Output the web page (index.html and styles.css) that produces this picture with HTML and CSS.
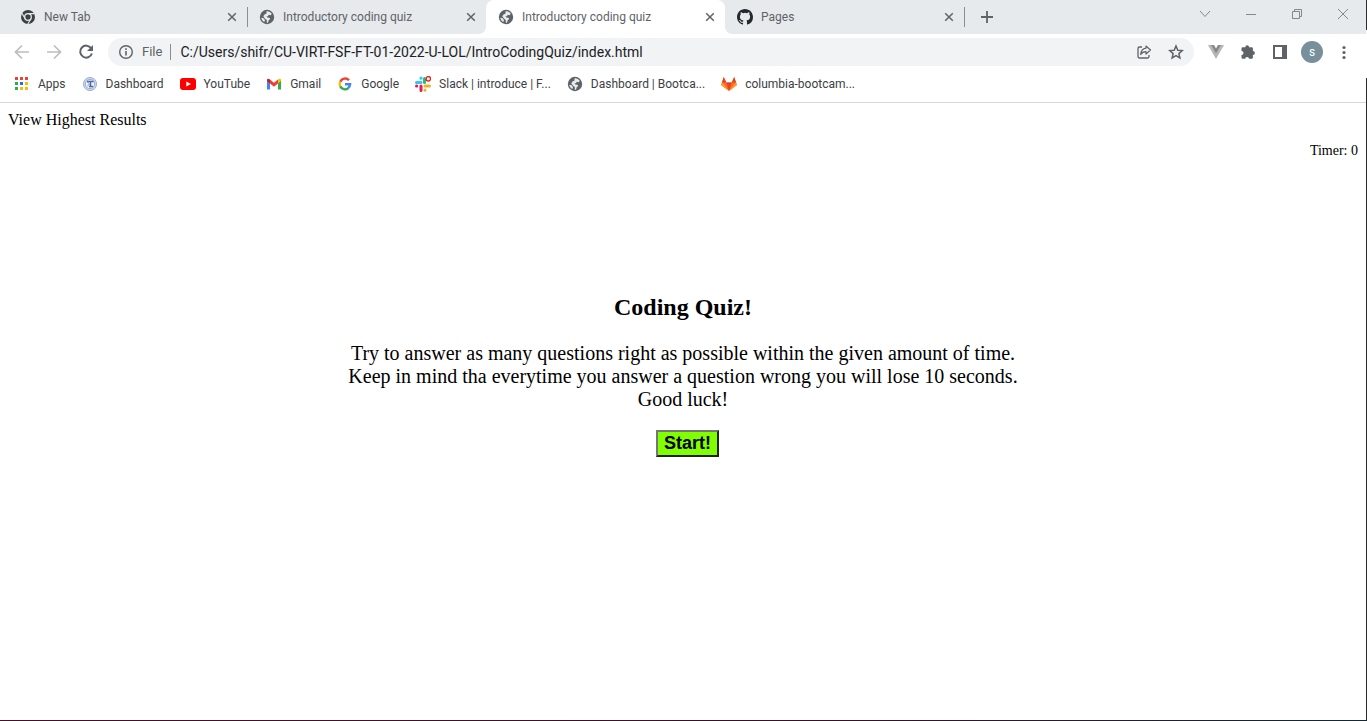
FILE: index.html
```html
<!DOCTYPE html>
<html lang="en">
<head>
<meta charset="utf-8">
<title>Introductory coding quiz</title>
<link rel="stylesheet" href="styles.css">
</head>
<body>
<svg class="sprite" aria-hidden="true">
  <symbol id="globe" viewBox="0 0 16 16"><circle cx="8" cy="8" r="7.2" fill="#5f6368"/><path d="M7.500 2.300C9.500 2 11.500 3 12.700 4.600L11.800 6.300 9.700 5.800 9 7.300 7.500 7.300 8.300 8.500 10.400 8.700 11.200 10 9.700 11.200 9 13.800 7.800 13.800 7.800 11 6 9.800 4.300 7.200 5.500 5.500 7.600 4.500ZM2.300 8.700 4.600 9.200 6 11.200 5.300 13C3.600 12.100 2.500 10.600 2.300 8.700Z" fill="#e9ecee"/></symbol>
  <symbol id="close" viewBox="0 0 10 10"><path d="M1.2 1.2 8.8 8.8M8.8 1.2 1.2 8.8" stroke="#5f6368" stroke-width="1.5" fill="none"/></symbol>
</svg>
<div class="window">
  <header class="chrome">
    <div class="tabstrip">
      <div class="tab">
        <svg class="icon" viewBox="0 0 16 16"><circle cx="8" cy="8" r="7" fill="#3c4043"/><circle cx="8" cy="8" r="3.3" fill="#3c4043" stroke="#e6eaed" stroke-width="1.3"/><path d="M8 4.6H14.2M5.1 9.7 2 4.4M10.9 9.7 7.8 15" stroke="#e6eaed" stroke-width="1.1"/></svg>
        <span class="tab-title">New Tab</span>
        <button class="tab-close" aria-label="Close tab"><svg><use href="#close"/></svg></button>
      </div>
      <div class="tab tab-line">
        <svg class="icon"><use href="#globe"/></svg>
        <span class="tab-title">Introductory coding quiz</span>
        <button class="tab-close" aria-label="Close tab"><svg><use href="#close"/></svg></button>
      </div>
      <div class="tab tab-active">
        <svg class="icon"><use href="#globe"/></svg>
        <span class="tab-title">Introductory coding quiz</span>
        <button class="tab-close" aria-label="Close tab"><svg><use href="#close"/></svg></button>
      </div>
      <div class="tab">
        <svg class="icon" viewBox="0 0 16 16"><path fill="#24292f" d="M8 0C3.58 0 0 3.58 0 8c0 3.54 2.29 6.53 5.47 7.59.4.07.55-.17.55-.38 0-.19-.01-.82-.01-1.49-2.01.37-2.53-.49-2.69-.94-.09-.23-.48-.94-.82-1.13-.28-.15-.68-.52-.01-.53.63-.01 1.08.58 1.23.82.72 1.21 1.87.87 2.33.66.07-.52.28-.87.51-1.07-1.78-.2-3.64-.89-3.64-3.95 0-.87.31-1.59.82-2.15-.08-.2-.36-1.02.08-2.12 0 0 .67-.21 2.2.82a7.6 7.6 0 0 1 4 0c1.53-1.04 2.2-.82 2.2-.82.44 1.1.16 1.92.08 2.12.51.56.82 1.27.82 2.15 0 3.07-1.87 3.75-3.65 3.95.29.25.54.73.54 1.48 0 1.07-.01 1.93-.01 2.2 0 .21.15.46.55.38A8 8 0 0 0 16 8c0-4.42-3.58-8-8-8Z"/></svg>
        <span class="tab-title">Pages</span>
        <button class="tab-close" aria-label="Close tab"><svg><use href="#close"/></svg></button>
      </div>
      <button class="new-tab" aria-label="New tab"><svg viewBox="0 0 12 12"><path d="M6 0V12M0 6H12" stroke="#5f6368" stroke-width="1.8"/></svg></button>
      <div class="window-controls">
        <button aria-label="Search tabs"><svg viewBox="0 0 12 12"><path d="M1 3 6 8.5 11 3"/></svg></button>
        <button aria-label="Minimize"><svg viewBox="0 0 12 12"><path d="M1 6.5H11"/></svg></button>
        <button aria-label="Restore"><svg viewBox="0 0 12 12"><path d="M1.5 3.5H8.5V10.5H1.5ZM3.5 3.5V1.5H10.5V8.5H8.5"/></svg></button>
        <button aria-label="Close"><svg viewBox="0 0 12 12"><path d="M1 1 11 11M11 1 1 11"/></svg></button>
      </div>
    </div>
    <div class="toolbar">
      <button class="tool nav" aria-label="Back"><svg viewBox="0 0 16 16"><path d="M15 8H2M8 1.5 1.5 8 8 14.5" stroke="#bbbdc0" stroke-width="1.7" fill="none"/></svg></button>
      <button class="tool nav" aria-label="Forward"><svg viewBox="0 0 16 16"><path d="M1 8H14M8 1.5 14.5 8 8 14.5" stroke="#bbbdc0" stroke-width="1.7" fill="none"/></svg></button>
      <button class="tool nav" aria-label="Reload"><svg viewBox="0 0 16 16"><path d="M13.2 4.3A6 6 0 1 0 13.9 9.5" stroke="#5f6368" stroke-width="2" fill="none"/><path d="M15 1V7H9Z" fill="#5f6368"/></svg></button>
      <div class="omnibox">
        <svg class="icon" viewBox="0 0 16 16"><circle cx="8" cy="8" r="6.3" fill="none" stroke="#5f6368" stroke-width="1.4"/><path d="M8 7V11.5M8 4.3V6" stroke="#5f6368" stroke-width="1.6"/></svg>
        <span class="scheme">File</span>
        <input class="url" type="text" aria-label="Address" value="C:/Users/shifr/CU-VIRT-FSF-FT-01-2022-U-LOL/IntroCodingQuiz/index.html">
        <button class="tool" aria-label="Share"><svg viewBox="0 0 16 16"><path d="M6 3H3.5A1.5 1.5 0 0 0 2 4.500V12.500A1.500 1.500 0 0 0 3.500 14H11.500A1.500 1.500 0 0 0 13 12.500V11" stroke="#5f6368" stroke-width="1.3" fill="none"/><path d="M10 2 14.500 6 10 10V7.700C7.500 7.700 5.800 8.700 4.700 10.500 5 7.300 6.700 4.700 10 4.200Z" stroke="#5f6368" stroke-width="1.2" fill="none" stroke-linejoin="round"/></svg></button>
        <button class="tool" aria-label="Bookmark"><svg viewBox="0 0 16 16"><path d="M8 2 9.800 6.200 14.300 6.600 10.900 9.600 11.900 14 8 11.700 4.100 14 5.100 9.600 1.700 6.600 6.200 6.200Z" stroke="#5f6368" stroke-width="1.500" fill="none"/></svg></button>
      </div>
      <div class="extensions">
        <button class="tool" aria-label="Vue devtools"><svg viewBox="0 0 16 16"><path d="M0 1H16L8 15Z" fill="#b5b5b5"/><path d="M3.200 1H12.800L8 9.300Z" fill="#858585"/><path d="M6 1H10L8 4.500Z" fill="#fff"/></svg></button>
        <button class="tool" aria-label="Extensions"><svg viewBox="0 0 16 16"><path d="M1.500 4.500Q1.500 3.200 2.800 3.200H5.300A1.900 1.900 0 1 1 9.100 3.200H11.700Q12.900 3.200 12.900 4.400V7A2 2 0 1 1 12.900 11V13.600Q12.900 14.800 11.700 14.800H9A1.900 1.900 0 0 0 5.200 14.800H2.700Q1.500 14.800 1.500 13.600V11A2 2 0 0 0 1.500 7Z" fill="#5f6368"/></svg></button>
        <button class="tool" aria-label="Side panel"><svg viewBox="0 0 16 16"><path d="M1 1H15V15H1ZM3 3V13H10V3Z" fill="#5f6368" fill-rule="evenodd"/></svg></button>
        <button class="avatar" aria-label="Profile">s</button>
        <button class="tool" aria-label="Menu"><svg viewBox="0 0 16 16" fill="#5f6368"><circle cx="8" cy="3.500" r="1.600"/><circle cx="8" cy="8.500" r="1.600"/><circle cx="8" cy="13.500" r="1.600"/></svg></button>
      </div>
    </div>
    <nav class="bookmarks">
      <a href="#"><svg class="icon" viewBox="0 0 16 16"><path fill="#ea4335" d="M1 1h3v3H1zM6 1h3v3H6zM11 1h3v3h-3z"/><path fill="#34a853" d="M1 6h3v3H1zM1 11h3v3H1z"/><path fill="#1a73e8" d="M6 6h3v3H6z"/><path fill="#fbbc04" d="M11 6h3v3h-3zM6 11h3v3H6zM11 11h3v3h-3z"/></svg>Apps</a>
      <a href="#"><svg class="icon" viewBox="0 0 16 16"><circle cx="8" cy="8" r="6.600" fill="#cfd8e8" stroke="#9dadd0" stroke-width=".9"/><circle cx="8" cy="8" r="4.700" fill="#edf1f8" stroke="#8c9fc9" stroke-width=".8"/><path d="M5 5.500H11.500M8.500 5.500V10.500M7 10.500H11" stroke="#4a68b0" stroke-width="1.400" fill="none"/><path d="M5.500 6 7.500 8 5.500 10" stroke="#7d93c6" stroke-width="1" fill="none"/></svg>Dashboard</a>
      <a href="#"><svg class="icon" viewBox="0 0 16 16"><rect y="2" width="16" height="12" rx="3" fill="#f00"/><path d="M6.300 5.500 11 8 6.300 10.500Z" fill="#fff"/></svg>YouTube</a>
      <a href="#"><svg class="icon" viewBox="0 0 16 16"><path d="M1 4V13.500H4V6.500Z" fill="#4285f4"/><path d="M15 4V13.500H12V6.500Z" fill="#34a853"/><path d="M4 3.500 8 6.800 12 3.500V7.500L8 10.800 4 7.500Z" fill="#ea4335"/><path d="M1 5V3.800Q1.500 2 4 3.500V7.500Z" fill="#c5221f"/><path d="M15 5V3.800Q14.500 2 12 3.500V7.500Z" fill="#fbbc04"/></svg>Gmail</a>
      <a href="#"><svg class="icon" viewBox="0 0 16 16" fill="none" stroke-width="2.400"><path d="M12 4.200A5.200 5.200 0 0 0 3.300 5.800" stroke="#ea4335"/><path d="M3.300 5.600A5.200 5.200 0 0 0 3.300 10.600" stroke="#fbbc04"/><path d="M3.300 10.400A5.200 5.200 0 0 0 11.200 12.200" stroke="#34a853"/><path d="M8 8.300H13.100C13 10 12.200 11.400 11 12.300" stroke="#4285f4"/></svg>Google</a>
      <a href="#"><svg class="icon" viewBox="0 0 16 16" fill="none" stroke-width="3" stroke-linecap="round"><path d="M1.500 6.500H6" stroke="#36c5f0"/><path d="M6 2V2.200" stroke="#36c5f0"/><path d="M9.500 2.500V6.500" stroke="#2eb67d"/><path d="M10 10H14.500M10 14V14.200" stroke="#ecb22e"/><path d="M6 10V14.500M1.500 10H1.800" stroke="#e01e5a"/><circle cx="13.300" cy="2.800" r="2.200" fill="#fff" stroke="#e8281b" stroke-width="1.400"/></svg>Slack | introduce | F...</a>
      <a href="#"><svg class="icon"><use href="#globe"/></svg>Dashboard | Bootca...</a>
      <a href="#"><svg class="icon" viewBox="0 0 16 16"><path d="M2.800 1 0 9 8 15 16 9 13.200 1 10.700 6.500H5.300Z" fill="#fc6d26"/><path d="M5.300 6.500H10.700L8 15Z" fill="#e24329"/><path d="M0 9 8 15 1 6.500ZM16 9 8 15 15 6.500Z" fill="#fca326"/><path d="M2.800 1 1 6.500H5.300ZM13.200 1 15 6.500H10.700Z" fill="#e24329"/></svg>columbia-bootcam...</a>
    </nav>
  </header>
  <main class="page">
    <div class="results">View Highest Results</div>
    <div class="timer">Timer: 0</div>
    <section class="quiz">
      <h1>Coding Quiz!</h1>
      <p>Try to answer as many questions right as possible within the given amount of time.<br>Keep in mind tha everytime you answer a question wrong you will lose 10 seconds.<br>Good luck!</p>
      <button class="start">Start!</button>
    </section>
  </main>
</div>
</body>
</html>
```
FILE: styles.css
```css
* { box-sizing: border-box; }
body { margin: 0; background: #fff; color: #000; font-family: "Liberation Serif", "Times New Roman", serif; }
button { border: 0; padding: 0; background: none; font: inherit; }
svg { display: block; }
.sprite { position: absolute; width: 0; height: 0; }

.window { position: relative; display: flex; flex-direction: column; min-height: 100vh; border-bottom: 1px solid; border-image: linear-gradient(to right, #4a0d2b, #3a1028 60%, #102a35) 1; }
.window::after { content: ""; position: absolute; top: 0; right: 0; bottom: 0; width: 1px; background: linear-gradient(#2a2a2a 30px, #fff 30px, #fff 78px, #2a2a2a 78px); }

.chrome { font-family: Roboto, "Noto Sans", sans-serif; font-size: 12px; color: #3c4043; border-bottom: 1px solid #d5d7da; }
.icon { width: 16px; height: 16px; flex: none; }

.tabstrip { display: flex; align-items: stretch; height: 34px; padding-left: 8px; background: #e6eaed; color: #5f6368; }
.tab { position: relative; display: flex; align-items: center; gap: 8px; flex: 0 1 239px; min-width: 0; padding: 0 10px 0 12px; }
.tab-title { flex: 1; white-space: nowrap; overflow: hidden; }
.tab-close svg { width: 10px; height: 10px; }
.tab-line::before { content: ""; position: absolute; left: 0; top: 7px; width: 1px; height: 20px; background: #8a8d91; }
.tab-active { background: #fff; border-radius: 8px 8px 0 0; }
.tab-active::before, .tab-active::after { content: ""; position: absolute; bottom: 0; width: 8px; height: 8px; }
.tab-active::before { left: -8px; background: radial-gradient(circle at 0 0, #e6eaed 8px, #fff 8px); }
.tab-active::after { right: -8px; background: radial-gradient(circle at 100% 0, #e6eaed 8px, #fff 8px); }
.new-tab { display: flex; align-items: center; align-self: center; height: 20px; padding: 0 16px; border-left: 1px solid #8a8d91; }
.new-tab svg { width: 12px; height: 12px; }
.window-controls { display: flex; margin-left: auto; padding-right: 1px; }
.window-controls button { display: flex; justify-content: center; width: 46px; padding-top: 8px; }
.window-controls svg { width: 12px; height: 12px; fill: none; stroke: #85888b; stroke-width: 1; }

.toolbar { display: flex; align-items: center; height: 36px; padding: 0 15px 0 14px; }
.tool svg { width: 16px; height: 16px; }
.nav { margin-right: 16px; }
.nav:nth-child(3) { margin-right: 14px; }
.omnibox { display: flex; align-items: center; flex: 1; height: 28px; padding: 0 10px; border-radius: 14px; background: #f1f3f4; }
.scheme { margin-left: 8px; padding-right: 8px; border-right: 1px solid #8a8d91; font-size: 13px; line-height: 16px; color: #5f6368; }
.url { flex: 1; min-width: 0; height: 24px; padding: 0 0 0 9px; border: 0; background: none; color: #202124; font: 14px Roboto, "Noto Sans", sans-serif; }
.omnibox .tool { margin-left: 16px; }
.extensions { display: flex; align-items: center; gap: 16px; margin-left: 14px; }
.avatar { width: 22px; height: 22px; margin: 0 -3px; border-radius: 50%; background: #78909c; color: #fff; font-size: 12px; line-height: 20px; }

.bookmarks { display: flex; align-items: center; gap: 16px; height: 32px; padding: 0 14px 4px; white-space: nowrap; overflow: hidden; }
.bookmarks a { display: flex; align-items: center; gap: 8px; color: inherit; text-decoration: none; }

.page { flex: 1; padding: 8px 9px 8px 8px; }
.results { font-size: 16px; line-height: 18px; }
.timer { margin-top: 14px; font-size: 14px; line-height: 16px; text-align: right; }
.quiz { margin-top: 135px; text-align: center; }
.quiz h1 { margin: 0; font-size: 24px; line-height: 27px; }
.quiz p { margin: 21px 0 19px; font-size: 20px; line-height: 23px; }
.start { margin-left: 9px; padding: 1px 6px; border: 2px solid; border-color: #767676 #212121 #212121 #767676; background: #7fff00; font: bold 18px "Liberation Sans", Arial, sans-serif; }
```
